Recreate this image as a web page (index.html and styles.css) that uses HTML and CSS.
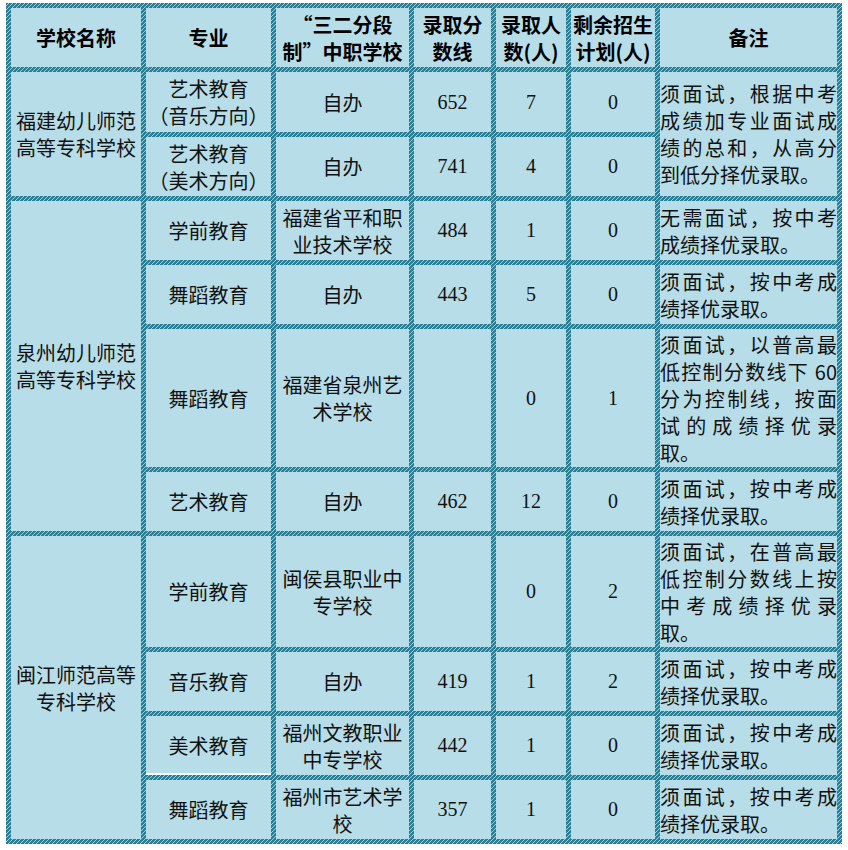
FILE: index.html
```html
<!DOCTYPE html>
<html lang="zh-CN">
<head>
<meta charset="utf-8">
<title>录取分数线</title>
<link rel="stylesheet" href="styles.css">
</head>
<body>
<div class="table">
  <div class="c h">学校名称</div>
  <div class="c h">专业</div>
  <div class="c h">“三二分段<br>制”中职学校</div>
  <div class="c h">录取分<br>数线</div>
  <div class="c h">录取人<br>数(人)</div>
  <div class="c h">剩余招生<br>计划(人)</div>
  <div class="c h">备注</div>

  <div class="c school span2">福建幼儿师范高等专科学校</div>
  <div class="c">艺术教育<br>（音乐方向）</div>
  <div class="c">自办</div>
  <div class="c n">652</div>
  <div class="c n">7</div>
  <div class="c n">0</div>
  <div class="c r span2"><p>须面试，根据中考成绩加专业面试成绩的总和，从高分到低分择优录取。</p></div>

  <div class="c">艺术教育<br>（美术方向）</div>
  <div class="c">自办</div>
  <div class="c n">741</div>
  <div class="c n">4</div>
  <div class="c n">0</div>

  <div class="c school span4">泉州幼儿师范高等专科学校</div>
  <div class="c">学前教育</div>
  <div class="c">福建省平和职业技术学校</div>
  <div class="c n">484</div>
  <div class="c n">1</div>
  <div class="c n">0</div>
  <div class="c r"><p>无需面试，按中考成绩择优录取。</p></div>

  <div class="c">舞蹈教育</div>
  <div class="c">自办</div>
  <div class="c n">443</div>
  <div class="c n">5</div>
  <div class="c n">0</div>
  <div class="c r"><p>须面试，按中考成绩择优录取。</p></div>

  <div class="c">舞蹈教育</div>
  <div class="c">福建省泉州艺术学校</div>
  <div class="c n"></div>
  <div class="c n">0</div>
  <div class="c n">1</div>
  <div class="c r"><p>须面试，以普高最低控制分数线下 60分为控制线，按面试的成绩择优录取。</p></div>

  <div class="c">艺术教育</div>
  <div class="c">自办</div>
  <div class="c n">462</div>
  <div class="c n">12</div>
  <div class="c n">0</div>
  <div class="c r"><p>须面试，按中考成绩择优录取。</p></div>

  <div class="c school span4">闽江师范高等专科学校</div>
  <div class="c">学前教育</div>
  <div class="c">闽侯县职业中专学校</div>
  <div class="c n"></div>
  <div class="c n">0</div>
  <div class="c n">2</div>
  <div class="c r"><p>须面试，在普高最低控制分数线上按中考成绩择优录取。</p></div>

  <div class="c">音乐教育</div>
  <div class="c">自办</div>
  <div class="c n">419</div>
  <div class="c n">1</div>
  <div class="c n">2</div>
  <div class="c r"><p>须面试，按中考成绩择优录取。</p></div>

  <div class="c white-line">美术教育</div>
  <div class="c">福州文教职业中专学校</div>
  <div class="c n">442</div>
  <div class="c n">1</div>
  <div class="c n">0</div>
  <div class="c r"><p>须面试，按中考成绩择优录取。</p></div>

  <div class="c">舞蹈教育</div>
  <div class="c">福州市艺术学校</div>
  <div class="c n">357</div>
  <div class="c n">1</div>
  <div class="c n">0</div>
  <div class="c r"><p>须面试，按中考成绩择优录取。</p></div>
</div>
</body>
</html>
```

FILE: styles.css
```css
html, body {
  background: #ffffff;
}

body {
  margin: 3px 0 0 6px;
  font-family: "Noto Sans CJK SC", "Noto Sans CJK JP", sans-serif;
  color: #111111;
}

.table {
  display: grid;
  width: max-content;
  grid-template-columns: 130px 125px 133px 77px 70px 84px 177px;
  grid-template-rows: 59px 60px 59px 59px 59px 138px 59px 111px 59px 59px 59px;
  gap: 5px;
  padding: 5px;
  background: repeating-linear-gradient(135deg, #2a7d93 0 1.77px, #a3ccd8 1.77px 2.828px);
}

.c {
  background: #b7dde8;
  display: flex;
  align-items: center;
  justify-content: center;
  text-align: center;
  font-size: 20px;
  line-height: 27px;
  font-weight: 400;
  overflow: hidden;
}

.h {
  font-weight: 700;
  color: #000000;
}

.n {
  font-family: "Liberation Serif", "Noto Sans CJK SC", serif;
}

.span2 {
  grid-row: span 2;
}

.span4 {
  grid-row: span 4;
}

.r {
  justify-content: flex-start;
  text-align: justify;
}

.r p {
  margin: 0;
  width: 100%;
  text-align: justify;
}

.white-line {
  box-shadow: inset 0 -2px 0 #ffffff;
}
```
